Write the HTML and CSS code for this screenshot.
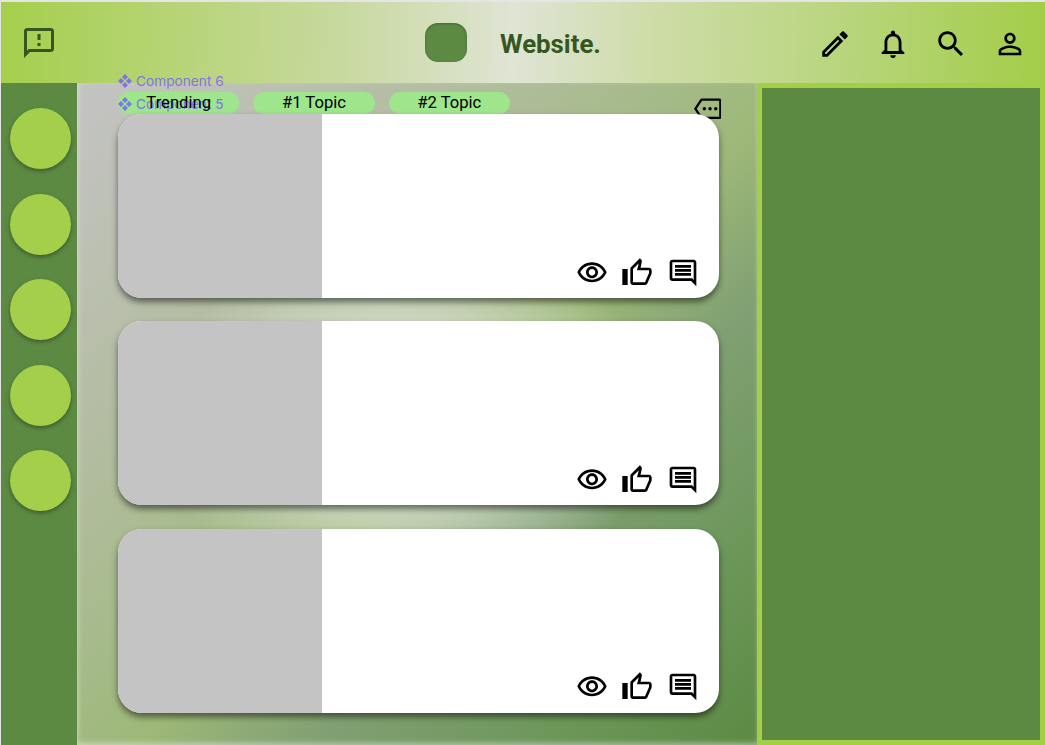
FILE: index.html
```html
<!DOCTYPE html>
<html lang="en">
<head>
  <meta charset="UTF-8">
  <title>Website.</title>
  <link rel="stylesheet" href="styles.css">
</head>
<body>
  <header class="topbar">
    <svg class="icon-report" viewBox="0 0 24 24"><path d="M20 2H4c-1.1 0-1.99.9-1.99 2L2 22l4-4h14c1.1 0 2-.9 2-2V4c0-1.1-.9-2-2-2zm0 14H5.17L4 17.17V4h16v12zM11 12h2v2h-2zm0-6h2v4h-2z"/></svg>
    <div class="brand">
      <div class="logo"></div>
      <div class="brand-name">Website.</div>
    </div>
    <div class="actions">
      <svg viewBox="0 0 24 24"><path d="M14.06 9.02l.92.92L5.92 19H5v-.92l9.06-9.06M17.66 3c-.25 0-.51.1-.7.29l-1.83 1.83 3.75 3.75 1.83-1.83c.39-.39.39-1.02 0-1.41l-2.34-2.34c-.2-.2-.45-.29-.71-.29zm-3.6 3.19L3 17.25V21h3.75L17.81 9.94l-3.75-3.75z"/></svg>
      <svg viewBox="0 0 24 24"><path d="M12 22c1.1 0 2-.9 2-2h-4c0 1.1.9 2 2 2zm6-6v-5c0-3.07-1.63-5.64-4.5-6.32V4c0-.83-.67-1.5-1.5-1.5s-1.5.67-1.5 1.5v.68C7.64 5.36 6 7.92 6 11v5l-2 2v1h16v-1l-2-2zm-2 1H8v-6c0-2.48 1.51-4.5 4-4.5s4 2.02 4 4.5v6z"/></svg>
      <svg viewBox="0 0 24 24"><path d="M15.5 14h-.79l-.28-.27C15.41 12.59 16 11.11 16 9.5 16 5.91 13.09 3 9.5 3S3 5.91 3 9.5 5.91 16 9.5 16c1.61 0 3.09-.59 4.23-1.57l.27.28v.79l5 4.99L20.49 19l-4.99-5zm-6 0C7.01 14 5 11.99 5 9.5S7.01 5 9.5 5 14 7.01 14 9.5 11.99 14 9.5 14z"/></svg>
      <svg viewBox="0 0 24 24"><path d="M12 5.9c1.16 0 2.1.94 2.1 2.1s-.94 2.1-2.1 2.1S9.9 9.16 9.9 8s.94-2.1 2.1-2.1m0 9c2.97 0 6.1 1.46 6.1 2.1v1.1H5.9V17c0-.64 3.13-2.1 6.1-2.1M12 4C9.79 4 8 5.79 8 8s1.79 4 4 4 4-1.79 4-4-1.79-4-4-4zm0 9c-2.67 0-8 1.34-8 4v3h16v-3c0-2.66-5.33-4-8-4z"/></svg>
    </div>
  </header>

  <div class="layout">
    <nav class="sidebar">
      <div class="circle"></div>
      <div class="circle"></div>
      <div class="circle"></div>
      <div class="circle"></div>
      <div class="circle"></div>
    </nav>

    <main class="feed">
      <div class="tabs">
        <div class="pill"><span>Trending</span></div>
        <div class="pill"><span>#1 Topic</span></div>
        <div class="pill"><span>#2 Topic</span></div>
        <svg class="icon-more" viewBox="0 0 24 24"><path d="M22 3H7c-.69 0-1.23.35-1.59.88L0 12l5.41 8.11c.36.53.9.89 1.59.89h15c1.1 0 2-.9 2-2V5c0-1.1-.9-2-2-2zm0 16H7.07L2.4 12l4.66-7H22v14z"/><circle cx="9" cy="12" r="1.5"/><circle cx="14" cy="12" r="1.5"/><circle cx="19" cy="12" r="1.5"/></svg>
      </div>

      <article class="card">
        <div class="thumb"></div>
        <div class="card-body">
          <svg viewBox="0 0 24 24"><path d="M12 6c3.79 0 7.17 2.13 8.82 5.5C19.17 14.87 15.79 17 12 17s-7.17-2.13-8.82-5.5C4.83 8.13 8.21 6 12 6m0-2C7 4 2.73 7.11 1 11.5 2.73 15.89 7 19 12 19s9.27-3.11 11-7.5C21.27 7.11 17 4 12 4zm0 5c1.38 0 2.5 1.12 2.5 2.5S13.38 14 12 14s-2.5-1.12-2.5-2.5S10.62 9 12 9m0-2c-2.48 0-4.5 2.02-4.5 4.5S9.52 16 12 16s4.5-2.02 4.5-4.5S14.48 7 12 7z"/></svg>
          <svg viewBox="0 0 24 24"><path d="M9 21h9c.83 0 1.54-.5 1.84-1.22l3.02-7.05c.09-.23.14-.47.14-.73v-2c0-1.1-.9-2-2-2h-6.31l.95-4.57.03-.32c0-.41-.17-.79-.44-1.06L14.17 1 7.58 7.59C7.22 7.95 7 8.45 7 9v10c0 1.1.9 2 2 2zM9 9l4.34-4.34L12 10h9v2l-3 7H9V9zM1 9h4v12H1z"/></svg>
          <svg viewBox="0 0 24 24"><path d="M21.99 4c0-1.1-.89-2-1.99-2H4c-1.1 0-2 .9-2 2v12c0 1.1.9 2 2 2h14l4 4-.01-18zM20 4v13.17L18.83 16H4V4h16zM6 12h12v2H6zm0-3h12v2H6zm0-3h12v2H6z"/></svg>
        </div>
      </article>

      <article class="card">
        <div class="thumb"></div>
        <div class="card-body">
          <svg viewBox="0 0 24 24"><path d="M12 6c3.79 0 7.17 2.13 8.82 5.5C19.17 14.87 15.79 17 12 17s-7.17-2.13-8.82-5.5C4.83 8.13 8.21 6 12 6m0-2C7 4 2.73 7.11 1 11.5 2.73 15.89 7 19 12 19s9.27-3.11 11-7.5C21.27 7.11 17 4 12 4zm0 5c1.38 0 2.5 1.12 2.5 2.5S13.38 14 12 14s-2.5-1.12-2.5-2.5S10.62 9 12 9m0-2c-2.48 0-4.5 2.02-4.5 4.5S9.52 16 12 16s4.5-2.02 4.5-4.5S14.48 7 12 7z"/></svg>
          <svg viewBox="0 0 24 24"><path d="M9 21h9c.83 0 1.54-.5 1.84-1.22l3.02-7.05c.09-.23.14-.47.14-.73v-2c0-1.1-.9-2-2-2h-6.31l.95-4.57.03-.32c0-.41-.17-.79-.44-1.06L14.17 1 7.58 7.59C7.22 7.95 7 8.45 7 9v10c0 1.1.9 2 2 2zM9 9l4.34-4.34L12 10h9v2l-3 7H9V9zM1 9h4v12H1z"/></svg>
          <svg viewBox="0 0 24 24"><path d="M21.99 4c0-1.1-.89-2-1.99-2H4c-1.1 0-2 .9-2 2v12c0 1.1.9 2 2 2h14l4 4-.01-18zM20 4v13.17L18.83 16H4V4h16zM6 12h12v2H6zm0-3h12v2H6zm0-3h12v2H6z"/></svg>
        </div>
      </article>

      <article class="card">
        <div class="thumb"></div>
        <div class="card-body">
          <svg viewBox="0 0 24 24"><path d="M12 6c3.79 0 7.17 2.13 8.82 5.5C19.17 14.87 15.79 17 12 17s-7.17-2.13-8.82-5.5C4.83 8.13 8.21 6 12 6m0-2C7 4 2.73 7.11 1 11.5 2.73 15.89 7 19 12 19s9.27-3.11 11-7.5C21.27 7.11 17 4 12 4zm0 5c1.38 0 2.5 1.12 2.5 2.5S13.38 14 12 14s-2.5-1.12-2.5-2.5S10.62 9 12 9m0-2c-2.48 0-4.5 2.02-4.5 4.5S9.52 16 12 16s4.5-2.02 4.5-4.5S14.48 7 12 7z"/></svg>
          <svg viewBox="0 0 24 24"><path d="M9 21h9c.83 0 1.54-.5 1.84-1.22l3.02-7.05c.09-.23.14-.47.14-.73v-2c0-1.1-.9-2-2-2h-6.31l.95-4.57.03-.32c0-.41-.17-.79-.44-1.06L14.17 1 7.58 7.59C7.22 7.95 7 8.45 7 9v10c0 1.1.9 2 2 2zM9 9l4.34-4.34L12 10h9v2l-3 7H9V9zM1 9h4v12H1z"/></svg>
          <svg viewBox="0 0 24 24"><path d="M21.99 4c0-1.1-.89-2-1.99-2H4c-1.1 0-2 .9-2 2v12c0 1.1.9 2 2 2h14l4 4-.01-18zM20 4v13.17L18.83 16H4V4h16zM6 12h12v2H6zm0-3h12v2H6zm0-3h12v2H6z"/></svg>
        </div>
      </article>
    </main>

    <aside class="panel"></aside>
  </div>

  <div class="tag tag-6">
    <svg viewBox="0 0 14 14"><path d="M7 0l3 3-3 3-3-3zM3 4l3 3-3 3-3-3zM11 4l3 3-3 3-3-3zM7 8l3 3-3 3-3-3z"/></svg>
    Component 6
  </div>
  <div class="tag tag-5">
    <svg viewBox="0 0 14 14"><path d="M7 0l3 3-3 3-3-3zM3 4l3 3-3 3-3-3zM11 4l3 3-3 3-3-3zM7 8l3 3-3 3-3-3z"/></svg>
    Component 5
  </div>
</body>
</html>
```

FILE: styles.css
```css
html {
  font-family: Roboto, sans-serif;
}

body {
  background-color: #e5e5e5;
  height: 745px;
  margin: 0;
  overflow: hidden;
  padding: 2px 0 0 1px;
  box-sizing: border-box;
  position: relative;
}

.topbar {
  align-items: center;
  background: linear-gradient(92deg, #a5cf4c 0%, #c8d9a0 33%, #dfe4d4 49%, #cddca6 63%, #b8d57c 81%, #a3cd48 100%);
  display: flex;
  height: 81px;
  padding-left: 20px;
}

.icon-report {
  fill: #34571f;
  height: 36px;
  width: 36px;
}

.brand {
  align-items: center;
  display: flex;
  gap: 33px;
  margin-left: 368px;
}

.logo {
  background-color: #5c8a43;
  border-radius: 13px;
  box-shadow: inset 0 1px 3px rgba(0, 0, 0, .25);
  height: 39px;
  width: 42px;
}

.brand-name {
  color: #34571f;
  font-size: 25.8px;
  font-weight: 700;
  margin-top: 3px;
}

.actions {
  display: flex;
  gap: 24px;
  margin-left: auto;
  margin-top: 3px;
  padding-right: 18.5px;
}

.actions svg {
  height: 34px;
  width: 34px;
}

.actions svg:last-child {
  margin-left: 1px;
}

.layout {
  display: flex;
  height: 662px;
}

.sidebar {
  background-color: #5c8a43;
  display: flex;
  flex-direction: column;
  gap: 24.5px;
  padding: 25px 0 0 9px;
  width: 67px;
}

.circle {
  background-color: #a4cf4b;
  border-radius: 50%;
  box-shadow: 0 2px 4px rgba(0, 0, 0, .35);
  height: 61px;
  width: 61px;
}

.feed {
  background:
    radial-gradient(ellipse 260px 175px at 330px 335px, rgba(238, 238, 238, .95), rgba(238, 238, 238, .65) 45%, rgba(238, 238, 238, 0)),
    linear-gradient(135deg, #c4c4c4 0%, #b5bda4 25%, #a9bb90 40%, #9db878 54%, #80a073 67%, #6c9658 85%, #5c8a43 100%);
  box-shadow: inset 3px 0 4px rgba(255, 255, 255, .15), inset 0 -3px 4px rgba(255, 255, 255, .3);
  box-sizing: border-box;
  display: flex;
  flex-direction: column;
  gap: 23.4px;
  padding: 9px 38px 0 41px;
  width: 680px;
}

.tabs {
  display: flex;
  gap: 14px;
  height: 22px;
  margin-bottom: -23.4px;
}

.pill {
  align-items: center;
  background-color: #9ee58c;
  border-radius: 11px;
  display: flex;
  font-size: 16.6px;
  height: 22px;
  justify-content: center;
  padding-bottom: 2px;
  box-sizing: border-box;
  width: 121.33px;
}

.pill span {
  position: relative;
  z-index: 2;
}

.icon-more {
  flex: none;
  height: 27.5px;
  margin: 2.5px -2px 0 auto;
  width: 27.5px;
}

.card {
  background-color: #fff;
  border-radius: 24px;
  box-shadow: 0 4px 6px rgba(0, 0, 0, .5);
  display: flex;
  height: 184px;
  overflow: hidden;
  position: relative;
}

.thumb {
  background-color: #c4c4c4;
  flex: none;
  width: 204px;
}

.card-body {
  align-items: flex-end;
  display: flex;
  flex: 1;
  gap: 13.5px;
  justify-content: flex-end;
  padding: 0 20.5px 9.5px 0;
}

.card-body svg {
  height: 32px;
  width: 32px;
}

.panel {
  background-color: #5c8a43;
  border: 5px solid #a3cf47;
  box-sizing: border-box;
  flex: 1;
  height: 662px;
}

.tag {
  align-items: center;
  color: #7b61ff;
  display: flex;
  font-family: Inter, sans-serif;
  font-size: 13.7px;
  gap: 4px;
  left: 118px;
  opacity: .85;
  position: absolute;
  z-index: 1;
}

.tag svg {
  fill: #7b61ff;
  height: 14px;
  width: 14px;
}

.tag-6 {
  top: 73px;
}

.tag-5 {
  top: 96px;
}
```
